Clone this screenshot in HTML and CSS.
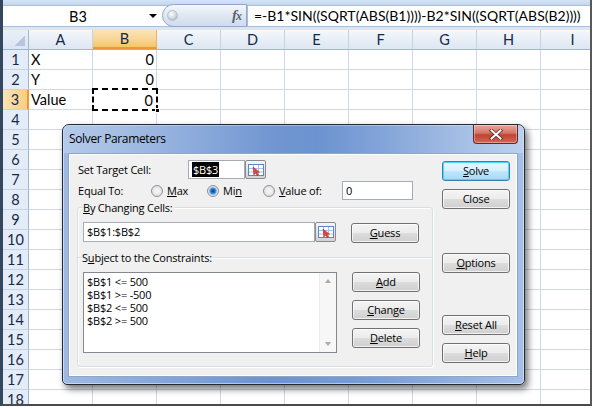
FILE: index.html
```html
<!DOCTYPE html>
<html>
<head>
<meta charset="utf-8">
<link rel="stylesheet" href="styles.css">
</head>
<body>
<div class="app">
  <div class="ribbon-edge"></div>
  <div class="fbar">
    <div class="namebox"><span class="nb-text">B3</span><span class="nb-arrow"></span></div>
    <div class="fx-pill"><span class="knob"></span><span class="fx">f<span class="fx-x">x</span></span></div>
    <div class="formula">=-B1*SIN((SQRT(ABS(B1))))-B2*SIN((SQRT(ABS(B2))))</div>
  </div>
  <div class="gap"></div>
  <div class="sheet">
    <div class="hrow">
      <div class="corner"></div>
      <div class="ch">A</div><div class="ch sel">B</div><div class="ch">C</div><div class="ch">D</div><div class="ch">E</div><div class="ch">F</div><div class="ch">G</div><div class="ch">H</div><div class="ch">I</div>
    </div>
    <div class="row"><div class="rh">1</div><div class="cells"><div class="c">X</div><div class="c num">0</div></div></div>
    <div class="row"><div class="rh">2</div><div class="cells"><div class="c">Y</div><div class="c num">0</div></div></div>
    <div class="row"><div class="rh sel">3</div><div class="cells"><div class="c">Value</div><div class="c num active">0<span class="handle"></span></div></div></div>
    <div class="row"><div class="rh">4</div><div class="cells"></div></div>
    <div class="row"><div class="rh">5</div><div class="cells"></div></div>
    <div class="row"><div class="rh">6</div><div class="cells"></div></div>
    <div class="row"><div class="rh">7</div><div class="cells"></div></div>
    <div class="row"><div class="rh">8</div><div class="cells"></div></div>
    <div class="row"><div class="rh">9</div><div class="cells"></div></div>
    <div class="row"><div class="rh">10</div><div class="cells"></div></div>
    <div class="row"><div class="rh">11</div><div class="cells"></div></div>
    <div class="row"><div class="rh">12</div><div class="cells"></div></div>
    <div class="row"><div class="rh">13</div><div class="cells"></div></div>
    <div class="row"><div class="rh">14</div><div class="cells"></div></div>
    <div class="row"><div class="rh">15</div><div class="cells"></div></div>
    <div class="row"><div class="rh">16</div><div class="cells"></div></div>
    <div class="row"><div class="rh">17</div><div class="cells"></div></div>
    <div class="row"><div class="rh">18</div><div class="cells"></div></div>
  </div>

  <div class="dialog">
    <div class="titlebar">
      <span class="title">Solver Parameters</span>
      <span class="closebtn"><svg width="14" height="11" viewBox="0 0 14 11"><path d="M2.5 1.5 L11.5 9.5 M11.5 1.5 L2.5 9.5" stroke="#5a2a25" stroke-width="3.6" stroke-linecap="square"/><path d="M2.5 1.5 L11.5 9.5 M11.5 1.5 L2.5 9.5" stroke="#ffffff" stroke-width="2" stroke-linecap="square"/></svg></span>
    </div>
    <div class="client">
      <div class="leftcol">
        <div class="line1">
          <span class="lbl lbl-target">Set Target Cell:</span>
          <span class="tbox tbox-target"><span class="hl">$B$3</span></span>
          <span class="refbtn"><svg width="16" height="12" viewBox="0 0 16 12"><rect x="0.5" y="0.5" width="15" height="11" fill="#fff" stroke="#5f86c4"/><path d="M1 4.5h14M1 8h14M5.5 1v10M10.5 1v10" stroke="#a9c2e8"/><path d="M5 3 L11.5 8.2 L9 8.4 L10.4 11 L9 11.6 L7.7 9 L6 10.8 Z" fill="#e2453c" stroke="#a8261f" stroke-width="0.5"/></svg></span>
        </div>
        <div class="line2">
          <span class="lbl lbl-equal">Equal To:</span>
          <span class="ropt ropt-max"><span class="radio"></span><span><u>M</u>ax</span></span>
          <span class="ropt ropt-min"><span class="radio on"></span><span>Mi<u>n</u></span></span>
          <span class="ropt ropt-val"><span class="radio"></span><span><u>V</u>alue of:</span></span>
          <span class="tbox tbox-val">0</span>
        </div>
        <div class="group">
          <span class="legend"><u>B</u>y Changing Cells:</span>
          <div class="grow grow1">
            <span class="tbox tbox-change">$B$1:$B$2</span>
            <span class="refbtn refbtn2"><svg width="16" height="12" viewBox="0 0 16 12"><rect x="0.5" y="0.5" width="15" height="11" fill="#fff" stroke="#5f86c4"/><path d="M1 4.5h14M1 8h14M5.5 1v10M10.5 1v10" stroke="#a9c2e8"/><path d="M5 3 L11.5 8.2 L9 8.4 L10.4 11 L9 11.6 L7.7 9 L6 10.8 Z" fill="#e2453c" stroke="#a8261f" stroke-width="0.5"/></svg></span>
            <span class="btn btn-guess"><u>G</u>uess</span>
          </div>
          <div class="divider"><span class="dlabel">S<u>u</u>bject to the Constraints:</span></div>
          <div class="grow grow2">
            <div class="listbox">
              <div class="items">
                <div>$B$1 &lt;= 500</div>
                <div>$B$1 &gt;= -500</div>
                <div>$B$2 &lt;= 500</div>
                <div>$B$2 &gt;= 500</div>
              </div>
              <div class="vscroll"><span class="arr up"></span><span class="arr down"></span></div>
            </div>
            <div class="btncol">
              <span class="btn"><u>A</u>dd</span>
              <span class="btn"><u>C</u>hange</span>
              <span class="btn"><u>D</u>elete</span>
            </div>
          </div>
        </div>
      </div>
      <div class="rightcol">
        <span class="btn default"><u>S</u>olve</span>
        <span class="btn">Close</span>
        <span class="btn b-options"><u>O</u>ptions</span>
        <span class="btn b-reset"><u>R</u>eset All</span>
        <span class="btn"><u>H</u>elp</span>
      </div>
    </div>
  </div>
</div>
</body>
</html>
```

FILE: styles.css
```css
* { box-sizing: border-box; margin: 0; padding: 0; }
html, body { width: 594px; height: 408px; overflow: hidden; background: #fff; }
body { font-family: Lato, "Liberation Sans", sans-serif; color: #000; }

.app {
  position: relative;
  width: 592px;
  height: 406px;
  border-left: 3px solid #34475f;
  border-right: 2px solid #585858;
  border-bottom: 2px solid #4b4b4b;
  overflow: hidden;
  background: #fff;
}

.ribbon-edge { height: 5px; background: linear-gradient(#d6e4f6, #c3d6ef); }

.fbar {
  height: 22px;
  display: flex;
  background: #fff;
  border-top: 1px solid #a9bedb;
  border-bottom: 1px solid #a9bedb;
}
.namebox {
  width: 159px;
  flex: none;
  display: flex;
  align-items: center;
  font-size: 14.5px;
}
.nb-text { flex: 1; text-align: center; padding-left: 4px; }
.nb-arrow {
  width: 0; height: 0;
  border-left: 4px solid transparent;
  border-right: 4px solid transparent;
  border-top: 4px solid #000;
  margin-right: 5px;
}
.fx-pill {
  width: 85px;
  flex: none;
  margin-top: -2px;
  height: 23px;
  border: 1px solid #8fa8cb;
  border-radius: 12px 0 0 12px;
  background: linear-gradient(#f4f7fb, #dfe7f2 50%, #cfdcec);
  display: flex;
  align-items: center;
  justify-content: space-between;
  padding: 0 5px 0 4px;
}
.knob {
  width: 11px; height: 11px; border-radius: 50%;
  background: radial-gradient(circle at 40% 35%, #ffffff 0, #d6dde6 45%, #9aa7b7 100%);
  border: 1px solid #b6c2d1;
}
.fx {
  font-family: "Liberation Serif", serif;
  font-style: italic;
  font-weight: bold;
  font-size: 15px;
  color: #5b6470;
  letter-spacing: -1px;
}
.fx-x { font-size: 12px; }
.formula {
  flex: 1;
  border-left: 1px solid #a9bedb;
  padding-left: 6px;
  font-size: 14px;
  letter-spacing: 0;
  line-height: 20px;
  white-space: nowrap;
  overflow: hidden;
}
.gap { height: 3px; background: #dce6f3; }

.sheet { font-size: 14.5px; }
.hrow { display: flex; height: 20px; border-bottom: 1px solid #9eb6ce; }
.corner {
  width: 26px; flex: none;
  border-right: 1px solid #9eb6ce;
  background:
    linear-gradient(135deg, transparent 55%, #b4c5dc 55%) no-repeat right 3px bottom 3px / 12px 12px,
    linear-gradient(#e9eff8, #dbe5f2);
}
.ch {
  width: 64px; flex: none;
  border-right: 1px solid #c5d3e4;
  background: linear-gradient(#f5f8fc, #e6edf6 60%, #dde6f2);
  text-align: center;
  line-height: 19px;
  color: #15294a;
}
.ch.sel {
  background: linear-gradient(#fbe3b4, #f8d79a 50%, #f3c667);
  border-bottom: 2px solid #f29536;
  border-right-color: #e9b25f;
  line-height: 18px;
}
.row { display: flex; height: 20px; }
.rh {
  width: 26px; flex: none;
  border-right: 1px solid #9eb6ce;
  border-bottom: 1px solid #c5d3e4;
  background: #e4ecf7;
  text-align: center;
  line-height: 19px;
  color: #15294a;
}
.rh.sel {
  background: linear-gradient(90deg, #fbe3b4, #f6cf82);
  border-right: 2px solid #f29536;
}
.cells {
  flex: 1;
  display: flex;
  border-bottom: 1px solid #d0d7e5;
  background: repeating-linear-gradient(90deg, transparent 0 63px, #d0d7e5 63px 64px);
}
.c {
  width: 64px; flex: none;
  padding: 0 2px;
  line-height: 19px;
  white-space: nowrap;
}
.c.num { text-align: right; padding-right: 3px; }
.c.active {
  position: relative;
  margin: -2px 0 -2px -1px;
  width: 66px;
  height: 23px;
  line-height: 21px;
  border: 2px dashed #000;
  background: #fff;
  padding-right: 3px;
}
.handle {
  position: absolute;
  right: -4px; bottom: -4px;
  width: 5px; height: 5px;
  background: #000;
  border: 1px solid #fff;
}

/* dialog */
.dialog {
  position: absolute;
  left: 59px;
  top: 124px;
  width: 463px;
  height: 261px;
  border: 1px solid #232a36;
  border-radius: 7px 7px 5px 5px;
  background: linear-gradient(90deg, #9fbae2 0%, #86a7da 20%, #6c93d0 45%, #7b9fd6 70%, #a6c0e6 100%);
  box-shadow: 3px 4px 7px rgba(0, 0, 0, 0.55), inset 0 0 0 1px rgba(255,255,255,0.45);
  padding: 0 6px 7px 5px;
  font-family: "Open Sans", "Liberation Sans", sans-serif;
  font-size: 11px;
  letter-spacing: -0.2px;
  display: flex;
  flex-direction: column;
}
.titlebar {
  height: 28px;
  flex: none;
  display: flex;
  align-items: flex-start;
  justify-content: space-between;
  background: linear-gradient(90deg, rgba(200,216,240,0.55), rgba(90,130,200,0.25) 55%, rgba(210,225,245,0.5));
  margin: 0 -6px 0 -5px;
  padding: 0 6px 0 6px;
  border-radius: 6px 6px 0 0;
}
.title {
  font-size: 12px;
  letter-spacing: -0.35px;
  line-height: 26px;
  margin-top: 1px;
  color: #000;
}
.closebtn {
  width: 45px;
  height: 19px;
  border: 1px solid #5b2b2b;
  border-top: none;
  border-radius: 0 0 4px 4px;
  background: linear-gradient(#e8a79e 0%, #d47567 45%, #c2412f 55%, #d16a55 100%);
  box-shadow: inset 0 0 0 1px rgba(255,255,255,0.35);
  display: flex;
  align-items: center;
  justify-content: center;
}
.client {
  flex: 1;
  background: #f0f0f0;
  border: 1px solid #8ea6c8;
  box-shadow: inset 0 0 0 1px #ffffff;
  display: flex;
  padding: 6px 0 0 8px;
  gap: 9px;
}
.leftcol { width: 356px; flex: none; display: flex; flex-direction: column; }
.rightcol { width: 68px; flex: none; display: flex; flex-direction: column; padding-top: 1px; }

.lbl { line-height: 19px; white-space: nowrap; }
.line1 { display: flex; height: 19px; }
.lbl-target { width: 111px; padding-left: 1px; }
.tbox {
  height: 19px;
  background: #fff;
  border: 1px solid #a5acb5;
  line-height: 17px;
  padding-left: 3px;
  white-space: nowrap;
}
.tbox-target { width: 57px; }
.hl { background: #000; color: #fff; padding: 0 1px; }
.refbtn {
  width: 21px; height: 19px;
  border: 1px solid #8b8b8b;
  border-radius: 2px;
  background: linear-gradient(#f5f5f5, #e3e3e3 50%, #d3d3d3);
  display: flex; align-items: center; justify-content: center;
}
.line2 { display: flex; height: 19px; margin-top: 2px; align-items: center; }
.lbl-equal { width: 74px; padding-left: 1px; }
.ropt { display: flex; align-items: center; gap: 4px; white-space: nowrap; }
.ropt-max { width: 56px; }
.ropt-min { width: 56px; }
.ropt-val { width: 79px; }
.radio {
  width: 12px; height: 12px; border-radius: 50%;
  border: 1px solid #8c8f94;
  background: radial-gradient(circle, #f8f8f8 0, #e2e2e2 70%, #cfcfcf 100%);
  flex: none;
}
.radio.on {
  background: radial-gradient(circle, #0d3b73 0, #1f64b5 1.5px, #4a98e0 3px, #b7d6f2 4px, #e6e6e6 4.6px, #d6d6d6 100%);
}
.tbox-val { width: 71px; }

.group {
  margin-top: 7px;
  height: 160px;
  border: 1px solid #d5dfe5;
  border-radius: 3px;
  box-shadow: inset 1px 1px 0 #fff, 1px 1px 0 #fff;
  padding: 0 0 0 5px;
}
.legend {
  display: block;
  width: max-content;
  background: #f0f0f0;
  line-height: 13px;
  margin-top: -7px;
  padding: 0 1px 0 0;
}
.grow { display: flex; align-items: flex-start; }
.grow1 { margin-top: 8px; }
.tbox-change { width: 232px; height: 20px; line-height: 18px; }
.refbtn2 { height: 20px; }
.divider {
  display: flex;
  align-items: center;
  height: 13px;
  margin: 8px 0 0 -5px;
}
.divider::before {
  content: "";
  width: 4px;
  height: 1px;
  background: #d5dfe5;
  box-shadow: 0 1px 0 #fff;
}
.divider::after {
  content: "";
  flex: 1;
  height: 1px;
  background: #d5dfe5;
  box-shadow: 0 1px 0 #fff;
}
.dlabel { line-height: 13px; padding-right: 1px; white-space: nowrap; }
.grow2 { margin-top: 8px; }
.btn {
  width: 68px;
  height: 20px;
  border: 1px solid #707070;
  border-radius: 3px;
  background: linear-gradient(#f4f4f4 0%, #ececec 48%, #dcdcdc 52%, #d0d0d0 100%);
  box-shadow: inset 0 0 0 1px rgba(255,255,255,0.7);
  text-align: center;
  line-height: 18px;
  white-space: nowrap;
  display: block;
}
.btn-guess { margin-left: 15px; margin-top: 1px; }
.listbox {
  width: 254px; height: 81px;
  background: #fff;
  border: 1px solid #828790;
  display: flex;
}
.items { flex: 1; padding: 2px 0 0 3px; line-height: 13px; }
.vscroll {
  width: 17px;
  background: #f7f7f7;
  border-left: 1px solid #ececec;
  display: flex; flex-direction: column; justify-content: space-between; align-items: center;
  padding: 6px 0 6px;
}
.arr { width: 0; height: 0; border-left: 3.5px solid transparent; border-right: 3.5px solid transparent; }
.arr.up { border-bottom: 4px solid #a9a9a9; }
.arr.down { border-top: 4px solid #a9a9a9; }
.btncol { display: flex; flex-direction: column; gap: 8px; margin-left: 15px; }
.rightcol .btn { margin-bottom: 8px; }
.btn.default {
  border-color: #3c7fb1;
  box-shadow: inset 0 0 0 1px #48d8fb;
  background: linear-gradient(#eaf6fd 0%, #d9f0fc 48%, #bee6fd 52%, #a7d9f5 100%);
}
.b-options { margin-top: 36px; }
.b-reset { margin-top: 34px; }
```
